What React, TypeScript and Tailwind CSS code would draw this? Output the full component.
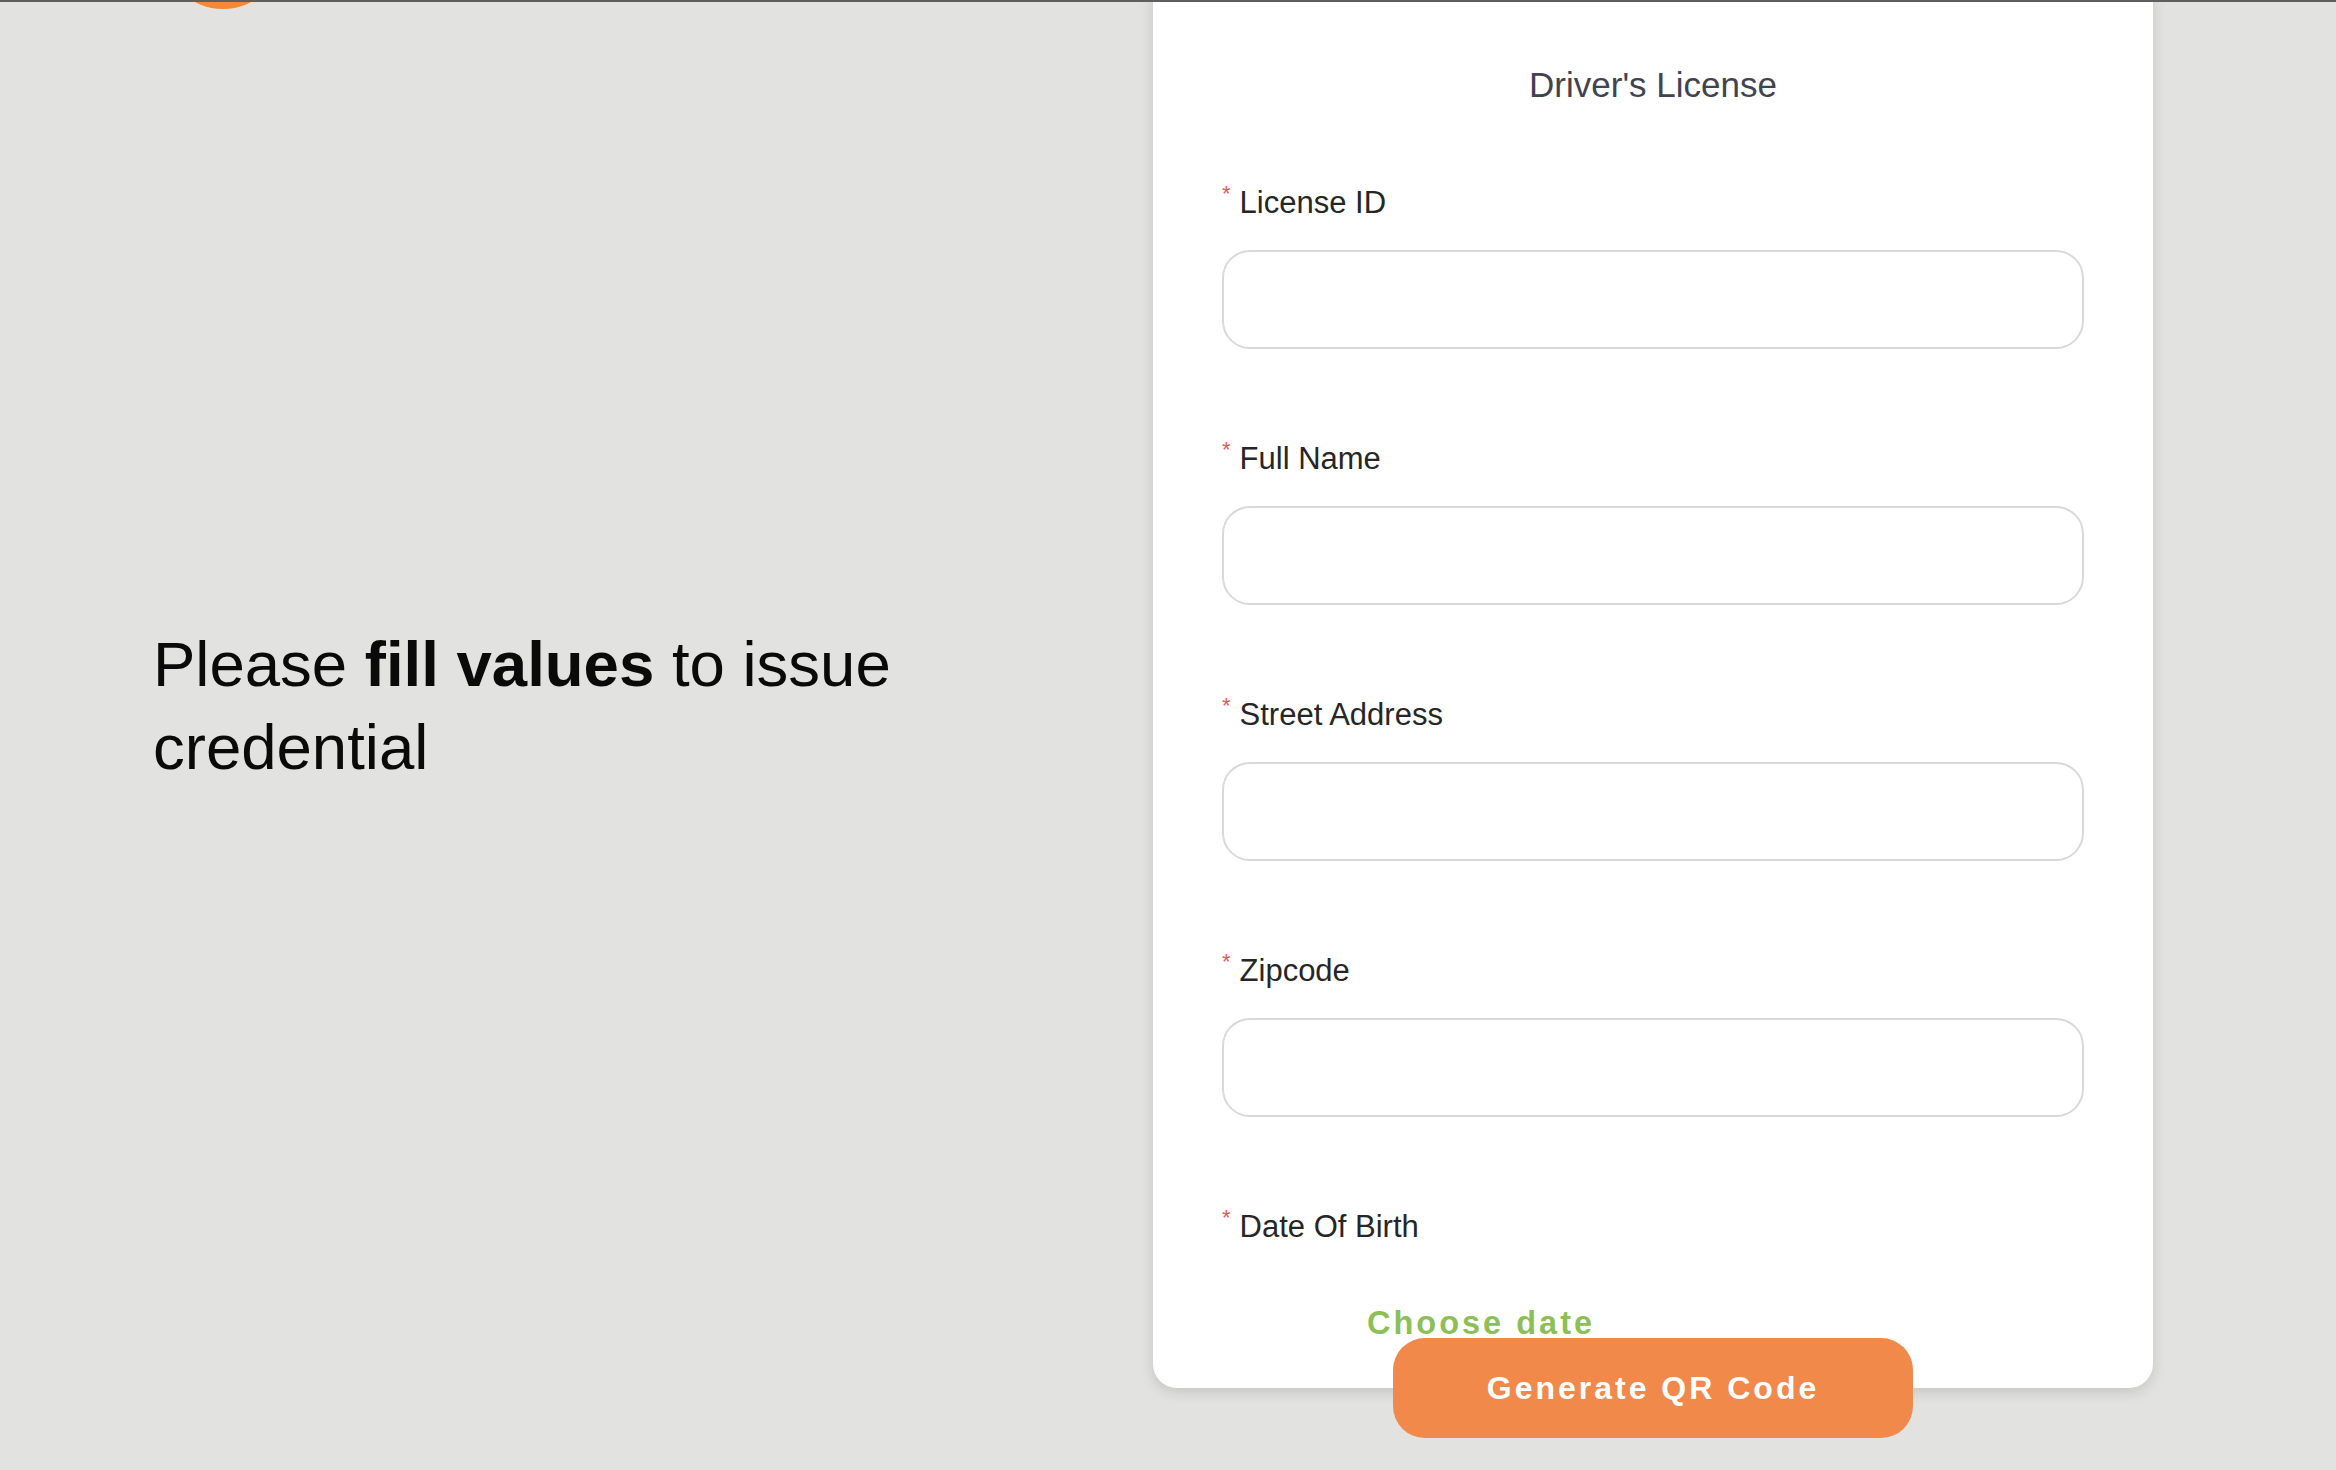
import React from 'react';

const fields = ['License ID', 'Full Name', 'Street Address', 'Zipcode'];

const FieldLabel: React.FC<{ text: string }> = ({ text }) => (
  <div className="flex items-start h-[36px]">
    <span className="text-[22px] leading-none text-[#f5555a] mt-[0px] mr-[9px]">*</span>
    <span className="text-[31px] leading-[39px] text-[#262626]">{text}</span>
  </div>
);

export default function App() {
  return (
    <div className="w-[2336px] h-[1470px] bg-[#e2e2e0] font-['Liberation_Sans',Arial,sans-serif] overflow-hidden">
      <div className="h-[2px] bg-[#5e5e5e]" />
      <div className="relative flex h-[1468px] overflow-hidden">
        {/* logo blob peeking from the top */}
        <div className="absolute left-[163px] top-[-113px] w-[120px] h-[120px] rounded-full bg-[#f28838]" />

        <div className="flex-1 flex items-center pl-[153px] pb-[61px]">
          <p className="max-w-[820px] text-[63.5px] leading-[83px] text-[#0a0a0a]">
            Please <b className="font-bold">fill values</b> to issue credential
          </p>
        </div>

        <div className="flex flex-col w-[1000px] mr-[183px]">
          <div className="-mt-[22px] bg-white rounded-[24px] shadow-[0_4px_14px_rgba(0,0,0,0.13)] px-[69px] pt-[85px] pb-[46px]">
            <h2 className="text-center text-[35px] leading-[40px] text-[#424350]">Driver's License</h2>

            <div className="mt-[78px] flex flex-col gap-[90px]">
              {fields.map((f) => (
                <div key={f} className="flex flex-col">
                  <FieldLabel text={f} />
                  <input
                    type="text"
                    className="mt-[31px] h-[99px] w-full rounded-[28px] border-2 border-[#d9d9d9] bg-white px-6 text-[30px] outline-none"
                  />
                </div>
              ))}
              <div className="flex flex-col">
                <FieldLabel text="Date Of Birth" />
                <div className="mt-[61px] pl-[145px] text-[32.5px] leading-[38px] font-bold tracking-[3px] text-[#8dbf57]">
                  Choose date
                </div>
              </div>
            </div>
          </div>

          <button className="relative self-center -mt-[50px] w-[520px] h-[100px] rounded-[32px] bg-[#f1894a] text-white text-[32px] font-bold tracking-[3px]">
            Generate QR Code
          </button>
        </div>
      </div>
    </div>
  );
}
